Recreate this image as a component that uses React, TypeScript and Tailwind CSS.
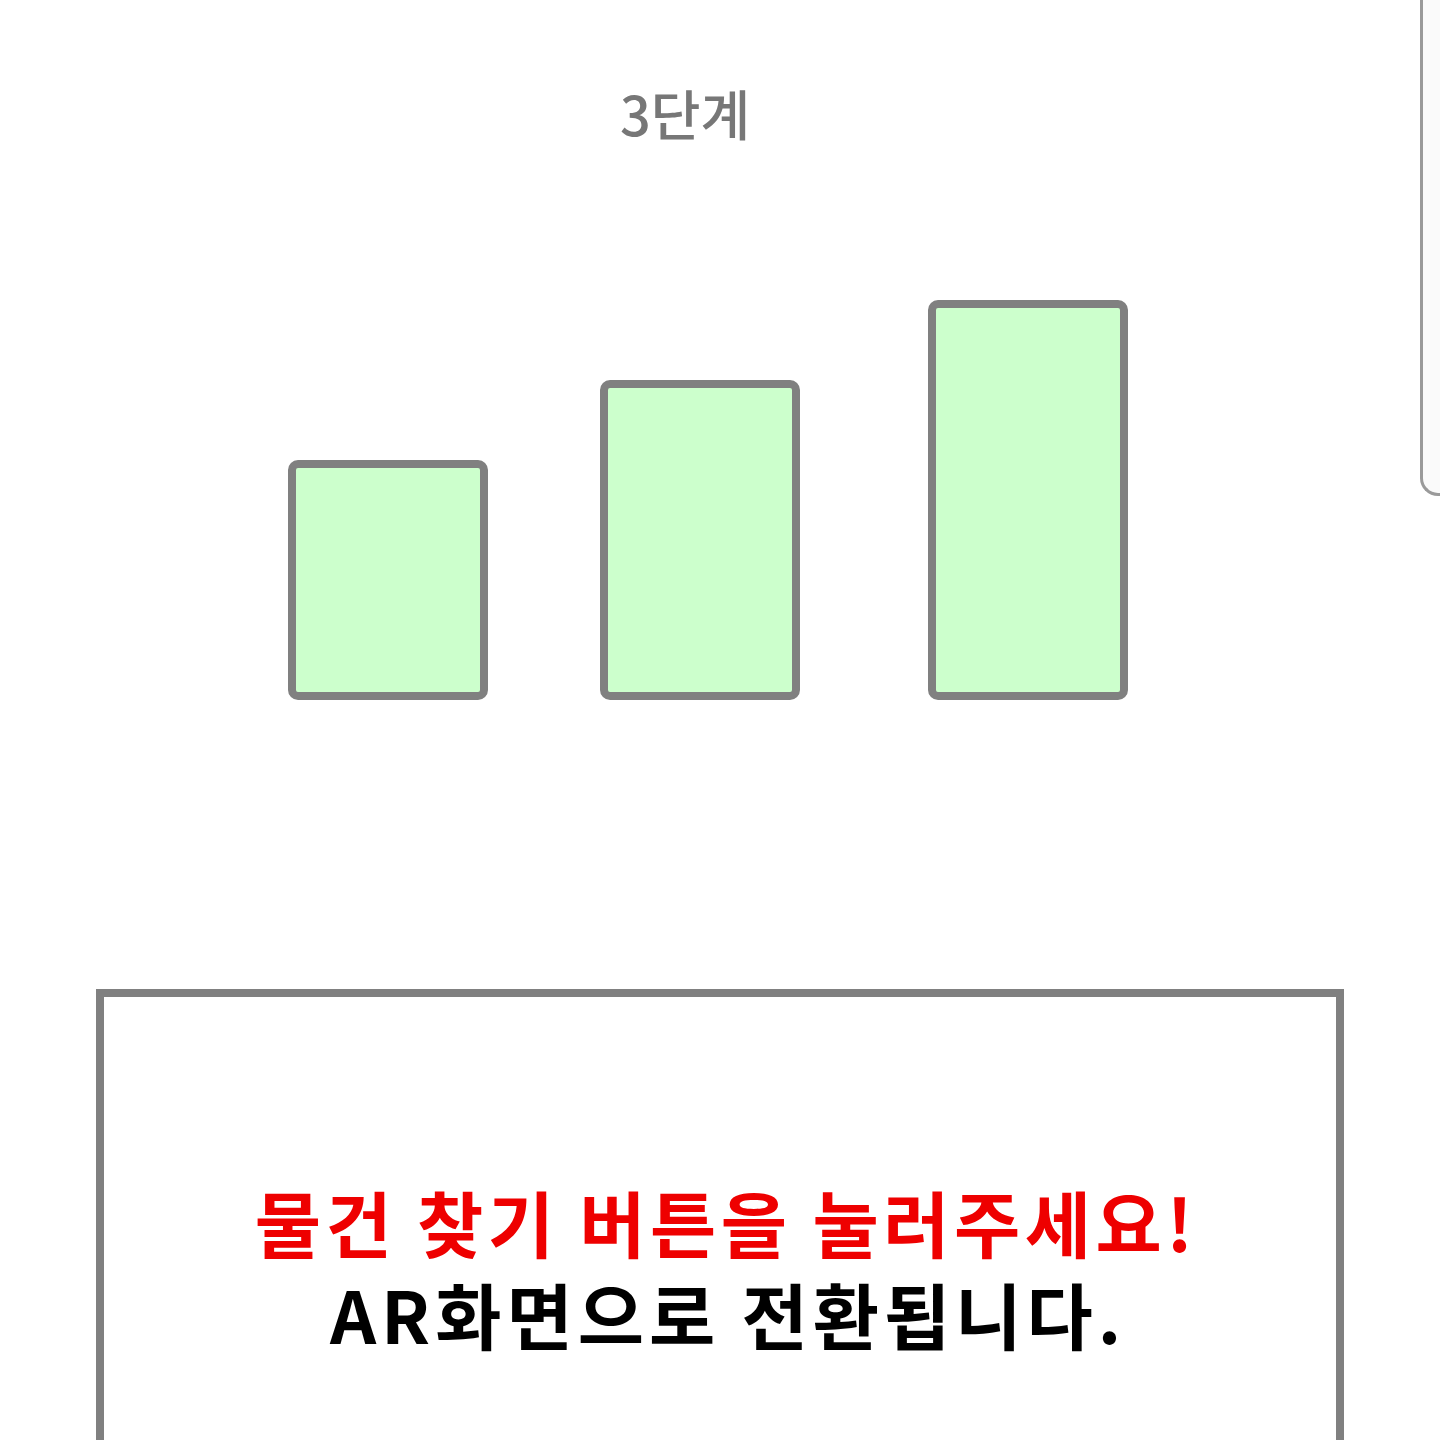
const bars = [
  { h: 'h-[240px]', ml: 'ml-[288px]' },
  { h: 'h-[320px]', ml: 'ml-[112px]' },
  { h: 'h-[400px]', ml: 'ml-[128px]' },
];

export default function App() {
  return (
    <div
      className="relative w-[1440px] h-[1440px] overflow-hidden bg-white"
      style={{ fontFamily: '"Noto Sans CJK KR", "Noto Sans", sans-serif' }}
    >
      {/* 오른쪽 스크롤 핸들 */}
      <div className="absolute right-0 top-[-4px] w-[20px] h-[500px] border-l-[3px] border-b-[3px] border-[#9a9a9a] rounded-bl-[18px] bg-[#fafafa]" />

      <div className="pt-[81px] flex justify-center pr-[70px]">
        <h1 className="text-[54px] leading-[64px] font-medium text-[#777777]">3단계</h1>
      </div>

      <div className="mt-[155px] flex items-end h-[400px]">
        {bars.map((b, i) => (
          <div
            key={i}
            className={`${b.ml} ${b.h} w-[200px] shrink-0 rounded-[10px] border-[8px] border-[#808080] bg-[#ccffcc]`}
          />
        ))}
      </div>

      <div className="mt-[289px] mx-[96px] h-[520px] border-[8px] border-[#808080] flex flex-col items-center pt-[178px]">
        <p className="text-[72px] leading-[92px] font-bold text-black text-center pl-[12px]">
          <span className="text-[#ee0000] tracking-[4.5px]">물건 찾기 버튼을 눌러주세요!</span>
          <br />
          <span className="tracking-[5px] pl-[4px]">AR화면으로 전환됩니다.</span>
        </p>
      </div>
    </div>
  );
}
